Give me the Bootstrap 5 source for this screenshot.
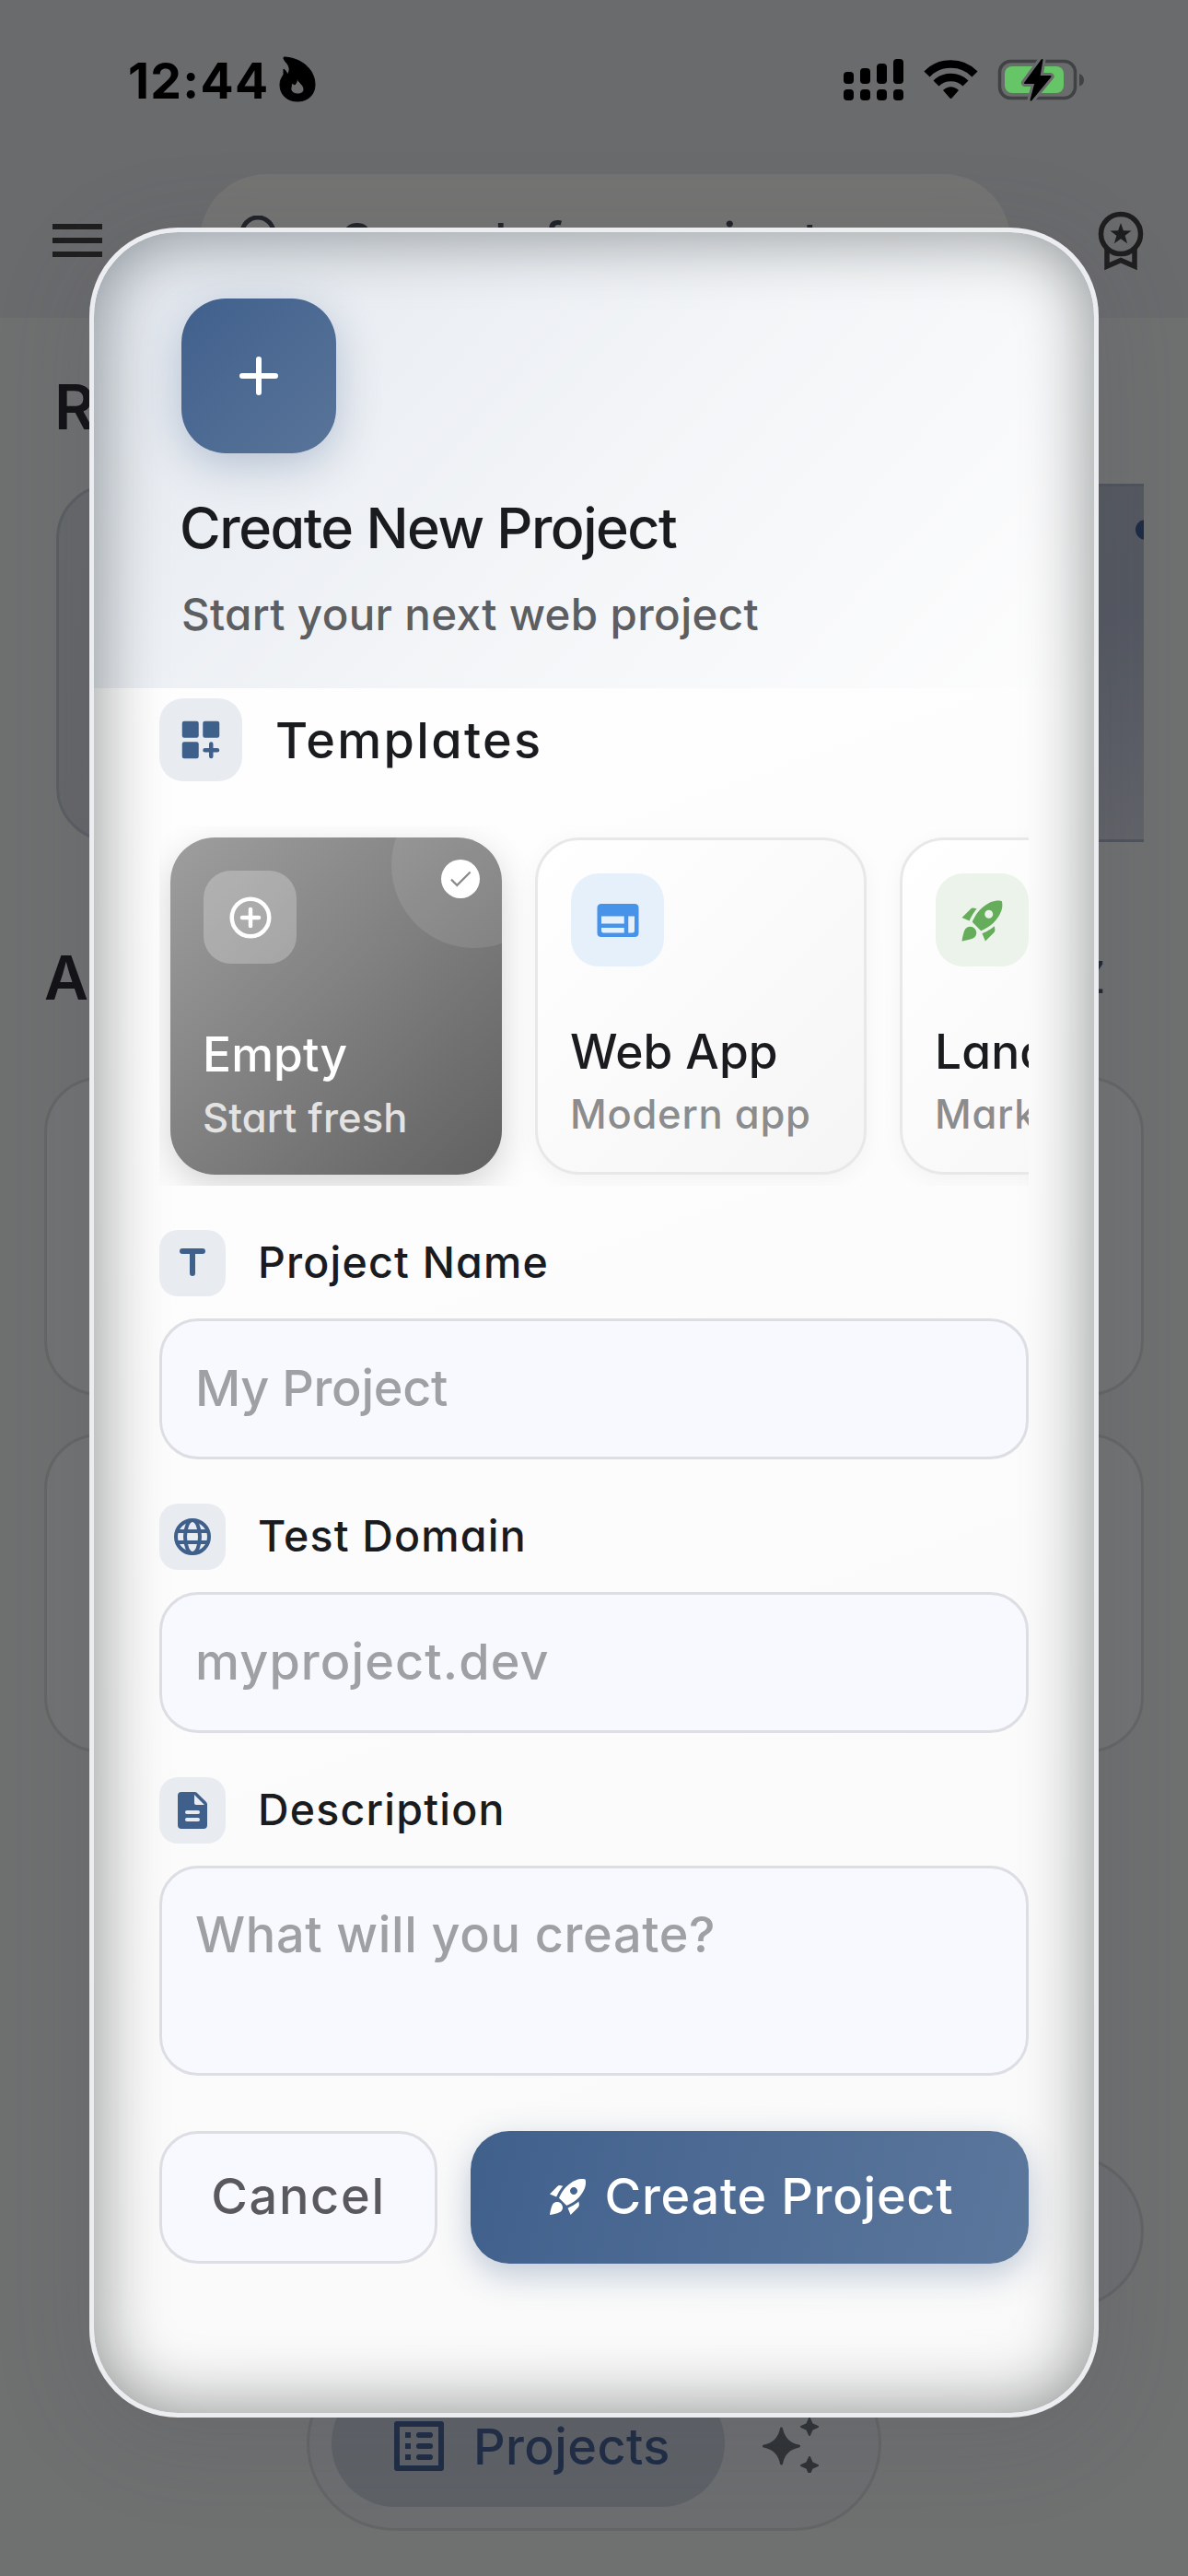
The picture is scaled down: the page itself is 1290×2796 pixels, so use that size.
<!DOCTYPE html>
<html lang="en">
<head>
<meta charset="utf-8">
<meta name="viewport" content="width=device-width, initial-scale=1">
<title>Create New Project</title>
<link href="https://cdn.jsdelivr.net/npm/bootstrap@5.3.0/dist/css/bootstrap.min.css" rel="stylesheet">
<style>
  body { font-family: Inter, "Open Sans", sans-serif; font-feature-settings: "cv11"; font-weight: 500; background: #6f7070; color: #1a1b1f; }
  svg { display: block; flex: none; }
  .phone { width: 1290px; height: 2796px; background: #6f7070; }

  /* page behind the dialog */
  .topbar { height: 345px; background: #6a6b6d; }
  .status { height: 189px; padding: 49px 113px 0 139px; color: #000; }
  .clock { font-size: 53.5px; font-weight: 700; line-height: 78px; letter-spacing: 1.3px; }
  .flame { margin: 8px 0 0 4px; }
  .tools { height: 144px; padding: 0 48px 0 57px; }
  .search-pill { width: 880px; height: 144px; margin-left: 106px; padding-left: 43px; border-radius: 72px; background: #747473; color: #1f2227; font-size: 54px; letter-spacing: 3.2px; }
  .recent-title { font-size: 67px; font-weight: 600; line-height: 80px; padding: 57px 0 0 59px; color: #111115; }
  .recent-strip { height: 389px; margin: 43px 48px 0 61px; }
  .recent-card { height: 389px; border: 3px solid #5a5f64; border-radius: 60px; flex: none; }
  .recent-a { width: 800px; background: linear-gradient(135deg, #66686a, #616369); }
  .recent-b { width: 800px; margin-left: -120px; background: linear-gradient(165deg, #55595d 0%, #545861 45%, #66676c 100%); border-color: #4d545e; }
  .recent-dot { width: 22px; height: 22px; left: 1172px; top: 39px; background: #1c2b45; }
  .all-row { height: 80px; margin-top: 107px; padding: 0 90px 0 48px; color: #111115; }
  .all-title { font-size: 66px; font-weight: 600; line-height: 80px; }
  .all-sort { font-size: 48px; line-height: 72px; color: #25262b; }
  .list-wrap { margin: 68px 48px 0; gap: 41px; }
  .list-tile { height: 346px; border: 3px solid #656667; border-radius: 60px; background: #727374; }
  .fab { left: 1074px; top: 2338px; width: 168px; height: 168px; border: 3px solid #636466; background: #6d6e70; }
  .dock { left: 333px; top: 2557px; width: 624px; height: 190px; border: 3px solid #646566; border-radius: 95px; background: #6c6e70; padding: 0 64px 0 24px; }
  .dock-tab { width: 427px; height: 138px; border-radius: 69px; background: #5e6267; color: #1e2c45; padding: 6px 0 0 59px; font-size: 54px; letter-spacing: .4px; }
  .dock-tab span { margin-left: 23px; }

  /* dialog */
  .sheet { left: 97px; top: 247px; width: 1096px; height: 2377px; border: 5px solid #ecedf0; border-radius: 96px; overflow: hidden; background: linear-gradient(160deg, #fff 0%, #fdfdfd 35%, #f9f9f9 100%); }
  .sheet-glow { left: 97px; top: 247px; width: 1096px; height: 2377px; border-radius: 96px; box-shadow: 0 20px 100px 10px rgba(70, 74, 84, .14); }
  .sheet-inner { height: 100%; border-radius: 91px; box-shadow: inset 0 0 68px 8px rgba(8, 14, 12, .4); }
  .sheet-head { height: 495px; padding: 72px 95px 0; background: linear-gradient(135deg, rgba(64, 97, 143, .15), rgba(64, 97, 143, .06) 52%, rgba(64, 97, 143, 0)); border-radius: 91px 91px 0 0; }
  .plus-box { width: 168px; height: 168px; border-radius: 48px; background: linear-gradient(135deg, #40608c, #597499); box-shadow: 0 12px 48px rgba(64, 96, 140, .32); }
  .sheet-title { font-size: 61px; font-weight: 500; line-height: 80px; letter-spacing: -1.5px; margin: 41px 0 0 -2px; }
  .sheet-sub { font-size: 47.5px; line-height: 60px; letter-spacing: .35px; margin: 24px 0 0; color: #5c5e62; }
  .sheet-body { padding: 11px 71px 0; }
  .chip { background: #e8ecf1; color: #40608c; flex: none; }
  .chip-lg { width: 90px; height: 90px; border-radius: 26px; }
  .chip-sm { width: 72px; height: 72px; border-radius: 20px; }
  .sect { font-size: 54px; letter-spacing: 2.3px; margin-left: 36px; }
  .strip { height: 390px; margin-top: 49px; padding: 12px 0 0 12px; gap: 36px; overflow: hidden; }
  .tpl { width: 360px; height: 366px; border-radius: 48px; flex: none; border: 3px solid #e8e8e9; padding: 36px; background: linear-gradient(135deg, #fff, #f5f5f5); box-shadow: 0 6px 24px rgba(0, 0, 0, .04); overflow: hidden; }
  .tpl-ico { width: 101px; height: 101px; border-radius: 30px; }
  .tpl-name { font-size: 51.5px; line-height: 60px; letter-spacing: .1px; margin: 62px 0 0 -1px; white-space: nowrap; }
  .tpl-note { font-size: 43.5px; line-height: 52px; letter-spacing: .75px; margin: 12px 0 0 -1px; color: #8b8c8e; white-space: nowrap; }
  .tpl-on { border: 0; color: #fff; background: linear-gradient(135deg, #9e9e9e, #616161); box-shadow: 0 12px 36px rgba(0, 0, 0, .16); }
  .tpl-on .tpl-ico { background: rgba(255, 255, 255, .25); }
  .tpl-on .tpl-name { margin-top: 68px; }
  .tpl-on .tpl-note { margin-top: 13px; color: #e3e3e3; letter-spacing: .15px; }
  .tpl-disc { width: 180px; height: 180px; right: -60px; top: -60px; background: rgba(255, 255, 255, .1); }
  .tpl-check { width: 42px; height: 42px; right: 24px; top: 24px; background: #fff; color: #8b8b8b; }
  .tpl-blue { background: #e6f0fb; color: #4893ea; }
  .tpl-green { background: #ebf3ea; color: #66ad5b; }
  .field-label { font-size: 46.5px; letter-spacing: 1.2px; margin-left: 35px; }
  .field { margin-top: 48px; }
  .field .form-control { margin-top: 24px; height: 153px; border: 3px solid #dddee4; border-radius: 42px; background: #f8f9fe; padding: 0 36px 3px; font-size: 54px; font-weight: 500; resize: none; box-shadow: none; }
  .field .form-control::placeholder { color: #9fa0a4; opacity: 1; }
  .field textarea.form-control { height: 228px; padding: 40px 36px 0; line-height: 64px; overflow: hidden; }
  .f-name::placeholder { letter-spacing: -.3px; }
  .f-domain::placeholder { letter-spacing: 1.1px; }
  .f-desc::placeholder { letter-spacing: .65px; }
  .actions { margin-top: 60px; gap: 36px; }
  .actions .btn { height: 144px; border-radius: 42px; font-size: 54px; font-weight: 500; padding: 0 0 3px; }
  .btn-cancel { width: 302px; background: #f8f9fe; border: 3px solid #dddee4; color: #5a5a5e; letter-spacing: 1.7px; }
  .btn-create { border: 0; color: #fff; background: linear-gradient(105deg, #40608c, #5c779c); letter-spacing: .75px; box-shadow: 0 12px 36px rgba(64, 96, 140, .32); }
</style>
</head>
<body>
<div class="phone position-relative overflow-hidden">

  <header class="topbar">
    <div class="status d-flex align-items-start">
      <span class="clock">12:44</span>
      <svg class="flame" width="46" height="62" viewBox="298 57 46 62"><path fill-rule="evenodd" d="M310 62c18 1 33 13 33 30 0 11-8 18-19 18s-19-7-19-18c0-5 2-8 4-11v-6c2 1 3 3 4 6 4-5 2-10-2-14-2-3-3-5-1-5zM323 84c2 6 8 8 8 13 0 3-3 5-7 5s-8-3-7-7c0-2 1-3 1-5l3 2c2-2 3-4 2-8z" stroke="#000" stroke-width="1"/></svg>
      <svg class="ms-auto" width="262" height="78" viewBox="915 49 262 78">
        <g><rect x="916" y="78" width="11" height="13" rx="4"/><rect x="934" y="74" width="11" height="17" rx="4"/><rect x="952" y="69" width="11" height="22" rx="4"/><rect x="970" y="64" width="11" height="27" rx="4"/><rect x="916" y="97" width="11" height="12" rx="4"/><rect x="934" y="97" width="11" height="12" rx="4"/><rect x="952" y="97" width="11" height="12" rx="4"/><rect x="970" y="97" width="11" height="12" rx="4"/></g>
        <g fill="none" stroke="#000" stroke-width="8.5"><path d="M1006.500 80.500Q1017 69.500 1032.500 69.500T1058.500 80.500"/><path d="M1016.500 90.500Q1023 84 1032.500 84T1048.500 90.500"/></g>
        <path d="M1024 98q8.500-7.500 17 0l-7 8q-1.500 2-3 0z"/>
        <rect x="1085.500" y="66.500" width="82" height="40" rx="12" fill="none" stroke="#414244" stroke-width="3.500"/>
        <rect x="1091" y="72" width="64" height="29" rx="8" fill="#66c567"/>
        <path d="M1172 80q5 2 5 7t-5 6.500z" fill="#414244"/>
        <path d="M1131.500 65l-18.500 25h11.500l-5 18.500 21-25.500h-12z" stroke="#6a6b6d" stroke-width="8" stroke-linejoin="round"/>
        <path d="M1131.500 65l-18.500 25h11.500l-5 18.500 21-25.500h-12z" stroke="#000" stroke-width="2" stroke-linejoin="round"/>
      </svg>
    </div>
    <div class="tools d-flex align-items-center">
      <svg width="54" height="36" viewBox="0 0 54 36" fill="#1e1e1e"><path d="M0 0h54v6H0zM0 15h54v6H0zM0 30h54v6H0z"/></svg>
      <div class="search-pill d-flex align-items-center">
        <svg width="54" height="54" viewBox="0 0 54 54" fill="none" stroke="#1f2227" stroke-width="5"><circle cx="20" cy="19" r="17"/><path d="M32 32l16 16"/></svg>
        <span class="ms-5 ps-2">Search for projects</span>
      </div>
      <svg class="ms-auto" width="50" height="66" viewBox="0 0 50 66" fill="none" stroke="#1e1e1e" stroke-width="5.500"><circle cx="25" cy="26" r="21.500"/><path d="M10 41v20l15-6.500L40 61V41"/><path d="M25 14l2.900 8.300 8.600.2-6.900 5.300 2.500 8.400-7.100-5-7.100 5 2.500-8.400-6.900-5.300 8.600-.2z" fill="#1e1e1e" stroke="none"/></svg>
    </div>
  </header>

  <div class="recent-title">Recent</div>
  <div class="recent-strip d-flex overflow-hidden position-relative">
    <div class="recent-card recent-a"></div>
    <div class="recent-card recent-b"></div>
    <span class="recent-dot rounded-circle position-absolute"></span>
  </div>
  <div class="all-row d-flex justify-content-between align-items-center">
    <span class="all-title">All</span><span class="all-sort">Z</span>
  </div>
  <div class="list-wrap d-flex flex-column">
    <div class="list-tile"></div>
    <div class="list-tile"></div>
  </div>
  <div class="fab rounded-circle position-absolute"></div>
  <nav class="dock position-absolute d-flex align-items-center justify-content-between">
    <div class="dock-tab d-flex align-items-center">
      <svg width="72" height="72" viewBox="0 0 24 24" fill="currentColor"><path fill-rule="evenodd" d="M4 3h16q1 0 1 1v16q0 1-1 1H4q-1 0-1-1V4q0-1 1-1zm1 2v14h14V5z"/><path d="M7 7h2v2H7zM7 11h2v2H7zM7 15h2v2H7z"/><rect x="11" y="7" width="6" height="2" rx="1"/><rect x="11" y="11" width="6" height="2" rx="1"/><rect x="11" y="15" width="6" height="2" rx="1"/></svg>
      <span>Projects</span>
    </div>
    <svg width="62" height="64" viewBox="829 2620 62 64" fill="#2f3235" stroke="#2f3235" stroke-width="2" stroke-linejoin="round"><path d="M849.500 2636q3 16 19 19-16 3-19 19-3-16-19-19 16-3 19-19z" stroke-width="3"/><path d="M880 2625l2.800 6.200 6.200 2.800-6.200 2.800-2.800 6.200-2.800-6.200-6.200-2.800 6.200-2.800zM880 2667l2.800 6.200 6.200 2.800-6.200 2.800-2.800 6.200-2.800-6.200-6.200-2.800 6.200-2.800z"/></svg>
  </nav>

  <div class="sheet-glow position-absolute"></div>
  <section class="sheet position-absolute">
    <div class="sheet-inner">
      <div class="sheet-head">
        <div class="plus-box d-flex align-items-center justify-content-center">
          <svg width="72" height="72" viewBox="0 0 24 24" stroke="#fff" stroke-width="2" stroke-linecap="round"><path d="M12 6v12M6 12h12"/></svg>
        </div>
        <h1 class="sheet-title">Create New Project</h1>
        <p class="sheet-sub">Start your next web project</p>
      </div>
      <div class="sheet-body">
        <div class="d-flex align-items-center">
          <span class="chip chip-lg d-flex align-items-center justify-content-center">
            <svg width="54" height="54" viewBox="0 0 24 24" fill="currentColor"><rect x="3" y="3" width="8" height="8" rx="1"/><rect x="13" y="3" width="8" height="8" rx="1"/><rect x="3" y="13" width="8" height="8" rx="1"/><path d="M17 14v6M14 17h6" stroke="currentColor" stroke-width="2" stroke-linecap="round"/></svg>
          </span>
          <span class="sect">Templates</span>
        </div>
        <div class="strip d-flex">
          <div class="tpl tpl-on position-relative">
            <span class="tpl-disc rounded-circle position-absolute"></span>
            <span class="tpl-check rounded-circle position-absolute d-flex align-items-center justify-content-center">
              <svg width="30" height="30" viewBox="0 0 24 24" fill="none" stroke="currentColor" stroke-width="1.700"><path d="M4 12.500l5 5L20.500 6"/></svg>
            </span>
            <div class="tpl-ico d-flex align-items-center justify-content-center">
              <svg width="54" height="54" viewBox="0 0 24 24" fill="none" stroke="#fff" stroke-width="2" stroke-linecap="round"><circle cx="12" cy="12" r="9"/><path d="M12 8v8M8 12h8"/></svg>
            </div>
            <div class="tpl-name">Empty</div>
            <div class="tpl-note">Start fresh</div>
          </div>
          <div class="tpl">
            <div class="tpl-ico tpl-blue d-flex align-items-center justify-content-center">
              <svg width="54" height="54" viewBox="0 0 24 24" fill="currentColor"><path fill-rule="evenodd" d="M4 4h16q2 0 2 2v12q0 2-2 2H4q-2 0-2-2V6q0-2 2-2zm0 6v3.500h11V10zm0 5.500V17q0 1 1 1h10v-2.500zM17 10v8h2q1 0 1-1v-7z"/></svg>
            </div>
            <div class="tpl-name">Web App</div>
            <div class="tpl-note">Modern app</div>
          </div>
          <div class="tpl">
            <div class="tpl-ico tpl-green d-flex align-items-center justify-content-center">
              <svg width="54" height="54" viewBox="0 0 24 24" fill="currentColor"><path fill-rule="evenodd" d="M9.190 6.350c-2.040 2.290-3.440 5.580-3.570 5.890L2 10.690l4.050-4.050c.47-.47 1.150-.68 1.810-.55zM11.170 17s3.740-1.550 5.890-3.700c5.400-5.400 4.500-9.620 4.210-10.570-.95-.3-5.170-1.190-10.570 4.210C8.550 9.090 7 12.830 7 12.830zm6.480-2.190c-2.290 2.040-5.580 3.440-5.890 3.570L13.310 22l4.050-4.050c.47-.47.68-1.150.55-1.810zM9 18c0 .83-.34 1.580-.88 2.120C6.940 21.300 2 22 2 22s.7-4.940 1.880-6.120C4.420 15.340 5.170 15 6 15c1.660 0 3 1.340 3 3zM13 9c0-1.100.9-2 2-2s2 .9 2 2-.9 2-2 2-2-.9-2-2z"/></svg>
            </div>
            <div class="tpl-name">Landing</div>
            <div class="tpl-note">Marketing</div>
          </div>
        </div>

        <div class="field">
          <label class="d-flex align-items-center" for="pname">
            <span class="chip chip-sm d-flex align-items-center justify-content-center">
              <svg width="48" height="48" viewBox="0 0 24 24" fill="none" stroke="currentColor" stroke-width="3" stroke-linecap="round"><path d="M6.500 5.500h11M12 5.500v12"/></svg>
            </span>
            <span class="field-label">Project Name</span>
          </label>
          <input class="form-control f-name" id="pname" type="text" placeholder="My Project">
        </div>
        <div class="field">
          <label class="d-flex align-items-center" for="pdomain">
            <span class="chip chip-sm d-flex align-items-center justify-content-center">
              <svg width="48" height="48" viewBox="0 0 24 24" fill="none" stroke="currentColor" stroke-width="2"><circle cx="12" cy="12" r="9"/><ellipse cx="12" cy="12" rx="4" ry="9"/><path d="M4 9h16M4 15h16"/></svg>
            </span>
            <span class="field-label">Test Domain</span>
          </label>
          <input class="form-control f-domain" id="pdomain" type="text" placeholder="myproject.dev">
        </div>
        <div class="field">
          <label class="d-flex align-items-center" for="pdesc">
            <span class="chip chip-sm d-flex align-items-center justify-content-center">
              <svg width="48" height="48" viewBox="0 0 24 24" fill="currentColor"><path fill-rule="evenodd" d="M6 2h7.200q.8 0 1.400.6l4.800 4.800q.6.600.6 1.400V20q0 2-2 2H6q-2 0-2-2V4q0-2 2-2zm7 1.500V8q0 1 1 1h4.500zM9 12a1 1 0 000 2h6a1 1 0 000-2zm0 4a1 1 0 000 2h6a1 1 0 000-2z"/></svg>
            </span>
            <span class="field-label">Description</span>
          </label>
          <textarea class="form-control f-desc" id="pdesc" placeholder="What will you create?"></textarea>
        </div>

        <div class="actions d-flex">
          <button class="btn btn-cancel flex-shrink-0" type="button">Cancel</button>
          <button class="btn btn-create flex-grow-1 d-flex align-items-center justify-content-center" type="button">
            <svg class="me-3" width="48" height="48" viewBox="0 0 24 24" fill="currentColor"><path fill-rule="evenodd" d="M9.190 6.350c-2.040 2.290-3.440 5.580-3.570 5.890L2 10.690l4.050-4.050c.47-.47 1.150-.68 1.810-.55zM11.170 17s3.740-1.550 5.890-3.700c5.400-5.400 4.500-9.620 4.210-10.570-.95-.3-5.170-1.190-10.570 4.210C8.550 9.090 7 12.830 7 12.830zm6.480-2.190c-2.290 2.040-5.580 3.440-5.890 3.570L13.310 22l4.050-4.050c.47-.47.68-1.150.55-1.810zM9 18c0 .83-.34 1.580-.88 2.120C6.940 21.300 2 22 2 22s.7-4.940 1.880-6.120C4.420 15.340 5.170 15 6 15c1.660 0 3 1.340 3 3zM13 9c0-1.100.9-2 2-2s2 .9 2 2-.9 2-2 2-2-.9-2-2z"/></svg>
            Create Project
          </button>
        </div>
      </div>
    </div>
  </section>
</div>
<script src="https://cdn.jsdelivr.net/npm/bootstrap@5.3.0/dist/js/bootstrap.bundle.min.js"></script>
</body>
</html>
